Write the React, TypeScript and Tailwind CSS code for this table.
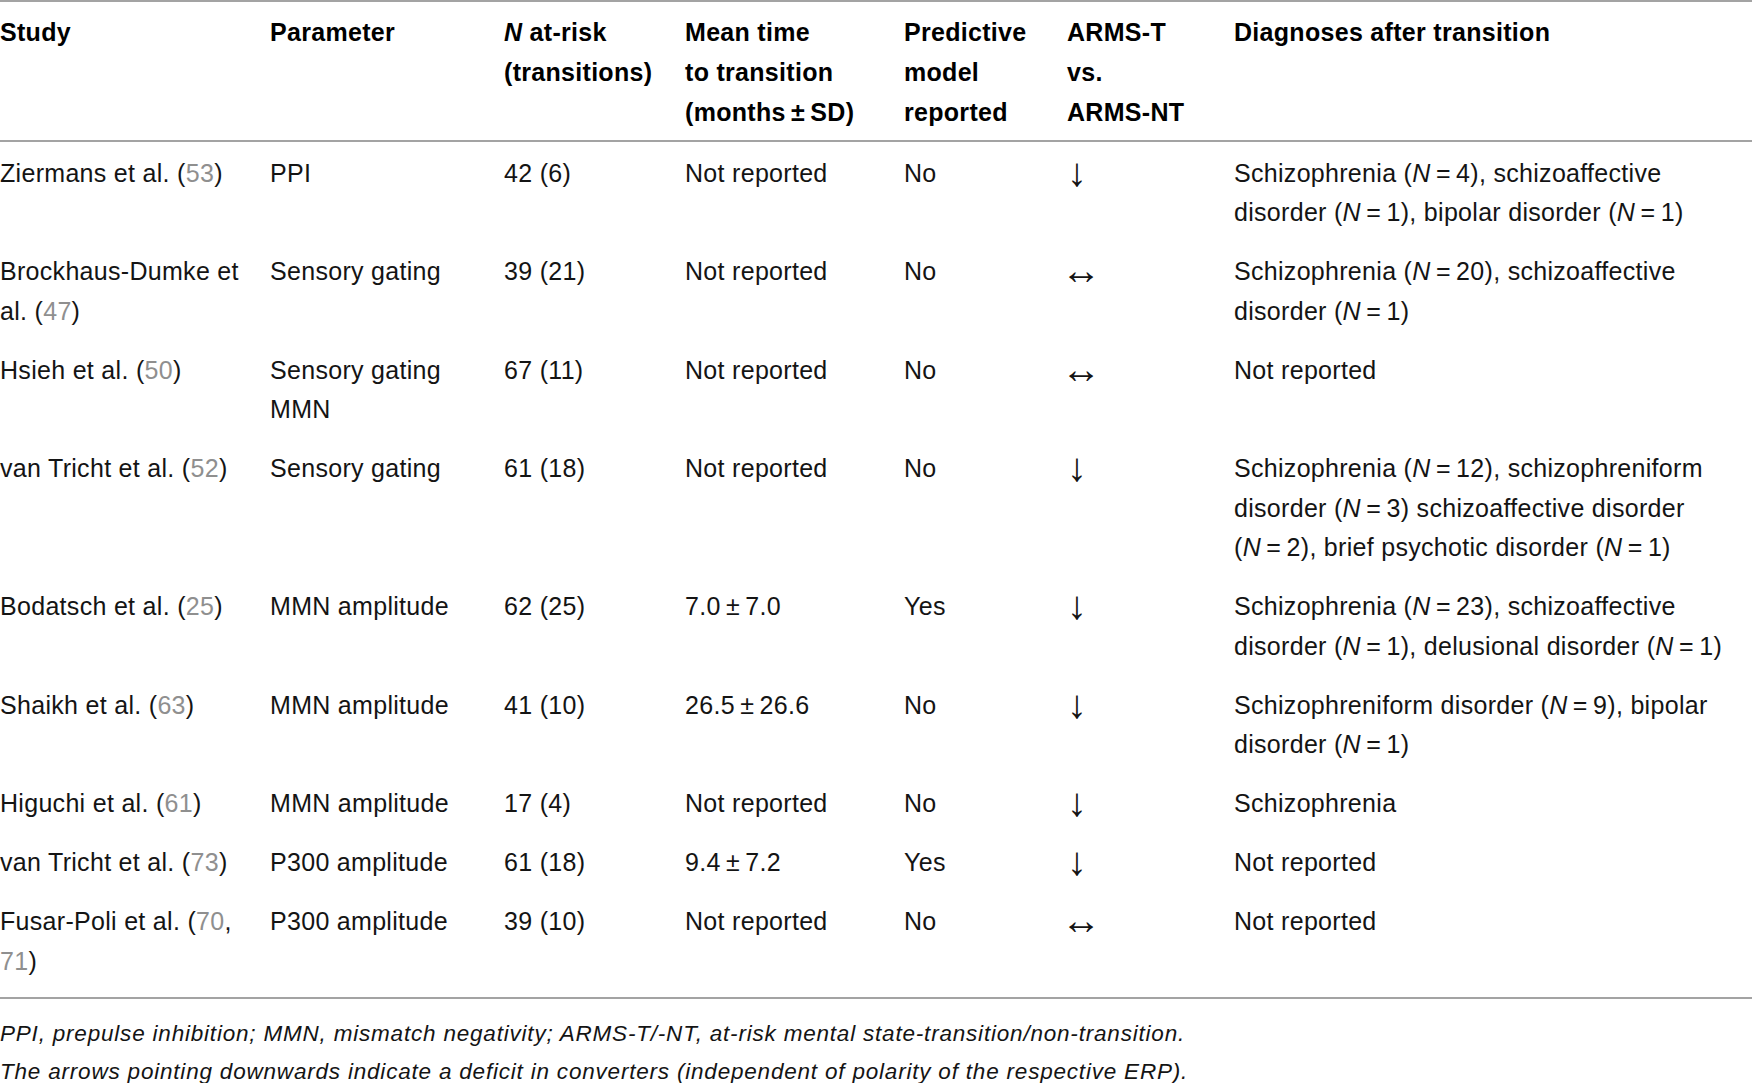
import React from "react";

type Row = {
  name: string;
  refs: string[];
  param: string[];
  n: string;
  mean: string;
  model: string;
  arrow: string;
  diag: React.ReactNode[];
};

const Nq = ({ v }: { v: string }) => (
  <>
    (<i>N</i>
    {"\u2009=\u2009"}
    {v})
  </>
);

const rows: Row[] = [
  {
    name: "Ziermans et al.",
    refs: ["53"],
    param: ["PPI"],
    n: "42 (6)",
    mean: "Not reported",
    model: "No",
    arrow: "↓",
    diag: [
      <>Schizophrenia <Nq v="4" />, schizoaffective</>,
      <>disorder <Nq v="1" />, bipolar disorder <Nq v="1" /></>,
    ],
  },
  {
    name: "Brockhaus-Dumke et al.",
    refs: ["47"],
    param: ["Sensory gating"],
    n: "39 (21)",
    mean: "Not reported",
    model: "No",
    arrow: "↔",
    diag: [
      <>Schizophrenia <Nq v="20" />, schizoaffective</>,
      <>disorder <Nq v="1" /></>,
    ],
  },
  {
    name: "Hsieh et al.",
    refs: ["50"],
    param: ["Sensory gating", "MMN"],
    n: "67 (11)",
    mean: "Not reported",
    model: "No",
    arrow: "↔",
    diag: [<>Not reported</>],
  },
  {
    name: "van Tricht et al.",
    refs: ["52"],
    param: ["Sensory gating"],
    n: "61 (18)",
    mean: "Not reported",
    model: "No",
    arrow: "↓",
    diag: [
      <>Schizophrenia <Nq v="12" />, schizophreniform</>,
      <>disorder <Nq v="3" /> schizoaffective disorder</>,
      <><Nq v="2" />, brief psychotic disorder <Nq v="1" /></>,
    ],
  },
  {
    name: "Bodatsch et al.",
    refs: ["25"],
    param: ["MMN amplitude"],
    n: "62 (25)",
    mean: "7.0\u2009±\u20097.0",
    model: "Yes",
    arrow: "↓",
    diag: [
      <>Schizophrenia <Nq v="23" />, schizoaffective</>,
      <>disorder <Nq v="1" />, delusional disorder <Nq v="1" /></>,
    ],
  },
  {
    name: "Shaikh et al.",
    refs: ["63"],
    param: ["MMN amplitude"],
    n: "41 (10)",
    mean: "26.5\u2009±\u200926.6",
    model: "No",
    arrow: "↓",
    diag: [
      <>Schizophreniform disorder <Nq v="9" />, bipolar</>,
      <>disorder <Nq v="1" /></>,
    ],
  },
  {
    name: "Higuchi et al.",
    refs: ["61"],
    param: ["MMN amplitude"],
    n: "17 (4)",
    mean: "Not reported",
    model: "No",
    arrow: "↓",
    diag: [<>Schizophrenia</>],
  },
  {
    name: "van Tricht et al.",
    refs: ["73"],
    param: ["P300 amplitude"],
    n: "61 (18)",
    mean: "9.4\u2009±\u20097.2",
    model: "Yes",
    arrow: "↓",
    diag: [<>Not reported</>],
  },
  {
    name: "Fusar-Poli et al.",
    refs: ["70", "71"],
    param: ["P300 amplitude"],
    n: "39 (10)",
    mean: "Not reported",
    model: "No",
    arrow: "↔",
    diag: [<>Not reported</>],
  },
];

const headers: React.ReactNode[][] = [
  ["Study"],
  ["Parameter"],
  [<><i>N</i> at-risk</>, "(transitions)"],
  ["Mean time", "to transition", "(months\u2009±\u2009SD)"],
  ["Predictive", "model", "reported"],
  ["ARMS-T", "vs.", "ARMS-NT"],
  ["Diagnoses after transition"],
];

const widths = ["w-[270px]", "w-[234px]", "w-[181px]", "w-[219px]", "w-[163px]", "w-[167px]", "w-[518px]"];

const Lines = ({ items }: { items: React.ReactNode[] }) => (
  <>
    {items.map((l, i) => (
      <div key={i} className="whitespace-nowrap">
        {l}
      </div>
    ))}
  </>
);

export default function App() {
  return (
    <div className="w-[1752px] bg-white text-[#141414] font-['Liberation_Sans',Arial,sans-serif]">
      <table className="w-full table-fixed border-separate border-spacing-0 text-left text-[25px] tracking-[0.3px]">
        <colgroup>
          {widths.map((w, i) => (
            <col key={i} className={w} />
          ))}
        </colgroup>
        <thead>
          <tr>
            {headers.map((h, i) => (
              <th
                key={i}
                className="align-top border-t-2 border-b-2 border-[#a3a3a3] pt-[10px] pb-[8px] pr-4 font-bold leading-[40px] text-black"
              >
                <Lines items={h} />
              </th>
            ))}
          </tr>
        </thead>
        <tbody className="leading-[39.5px]">
          {rows.map((r, i) => {
            const first = i === 0;
            const last = i === rows.length - 1;
            const pad = `${first ? "pt-[11.75px]" : "pt-[9.75px]"} ${last ? "pb-[16px] border-b-2 border-[#a3a3a3]" : "pb-[9.75px]"}`;
            return (
              <tr key={i}>
                <td className={`align-top pr-5 ${pad}`}>
                  {r.name} (
                  {r.refs.map((ref, j) => (
                    <React.Fragment key={j}>
                      {j > 0 && ", "}
                      <span className="text-[#8f8f8f]">{ref}</span>
                    </React.Fragment>
                  ))}
                  )
                </td>
                <td className={`align-top pr-4 ${pad}`}>
                  <Lines items={r.param} />
                </td>
                <td className={`align-top pr-4 ${pad}`}>{r.n}</td>
                <td className={`align-top pr-4 ${pad}`}>{r.mean}</td>
                <td className={`align-top pr-4 ${pad}`}>{r.model}</td>
                <td className={`align-top pr-4 ${pad}`}>
                  <span
                    className={`inline-block text-[40px] leading-[0] align-[-4px] tracking-normal ${r.arrow === "↔" ? "-ml-[6px]" : ""}`}
                  >
                    {r.arrow}
                  </span>
                </td>
                <td className={`align-top ${pad}`}>
                  <Lines items={r.diag} />
                </td>
              </tr>
            );
          })}
        </tbody>
      </table>
      <div className="mt-[16px] text-[22.5px] italic leading-[37.5px] tracking-[0.8px]">
        <p>
          PPI, prepulse inhibition; MMN, mismatch negativity; ARMS-T/-NT, at-risk mental
          state-transition/non-transition.
        </p>
        <p>
          The arrows pointing downwards indicate a deficit in converters (independent of polarity of
          the respective ERP).
        </p>
      </div>
    </div>
  );
}
